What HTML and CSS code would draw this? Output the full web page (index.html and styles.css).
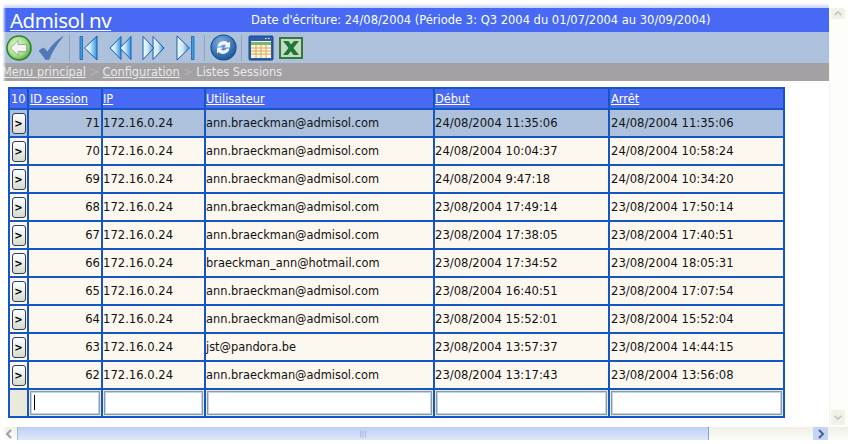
FILE: index.html
```html
<!DOCTYPE html>
<html lang="fr">
<head>
<meta charset="utf-8">
<title>Admisol nv</title>
<link rel="stylesheet" href="styles.css">
</head>
<body>
<div class="window">
  <div class="top-row">
    <main class="main">
      <header class="titlebar">
        <a class="brand">Admisol nv</a>
        <span class="period">Date d'écriture: 24/08/2004 (Période 3: Q3 2004 du 01/07/2004 au 30/09/2004)</span>
      </header>
      <nav class="toolbar">
        <svg class="ico i-go" viewBox="0 0 26 26"><defs><radialGradient id="gb" cx=".4" cy=".4" r=".65"><stop offset="0" stop-color="#eaf7df"/><stop offset=".65" stop-color="#a6dc86"/><stop offset="1" stop-color="#4ea83f"/></radialGradient></defs><circle cx="13" cy="13" r="12" fill="url(#gb)" stroke="#2f7f33" stroke-width="1.6"/><path d="M4.500 13l7.500-7.500v4h8.500v7H12v4z" fill="#f4f6ee" stroke="#8a9a86" stroke-width=".8"/></svg>
        <svg class="ico i-check" viewBox="0 0 26 24"><path d="M1 15C3 13 5 12 6 12L9.500 16C13 10 18 5 25 .5 19 8 14 15 11 23.500H7.500C5.500 20 3 17 1 15Z" fill="#5178b8" stroke="#3e64a6" stroke-width=".5"/></svg>
        <span class="sep s1"></span>
        <svg class="ico i-first" viewBox="0 0 19 26"><defs><linearGradient id="nv" x1="0" y1="0" x2="1" y2="0"><stop offset="0" stop-color="#f4fbff"/><stop offset=".45" stop-color="#cfe9f8"/><stop offset="1" stop-color="#2a93e4"/></linearGradient></defs><path d="M1 1.500h2.500v23H1z" fill="#3aa0e8" stroke="#1a5ca8" stroke-width=".8"/><path d="M18 1v24L5.500 13z" fill="url(#nv)" stroke="#1a5ca8"/></svg>
        <svg class="ico i-prev" viewBox="0 0 23 26"><path d="M12 1.500v23L1 13z" fill="url(#nv)" stroke="#1a5ca8"/><path d="M22 1.500v23L11 13z" fill="url(#nv)" stroke="#1a5ca8"/></svg>
        <svg class="ico i-next" viewBox="0 0 23 26"><path d="M11 1.500v23L22 13z" fill="url(#nv)" stroke="#1a5ca8"/><path d="M1 1.500v23L12 13z" fill="url(#nv)" stroke="#1a5ca8"/></svg>
        <svg class="ico i-last" viewBox="0 0 19 26"><path d="M15.500 1.500H18v23h-2.500z" fill="#3aa0e8" stroke="#1a5ca8" stroke-width=".8"/><path d="M1 1v24L13.500 13z" fill="url(#nv)" stroke="#1a5ca8"/></svg>
        <span class="sep s2"></span>
        <svg class="ico i-refresh" viewBox="0 0 27 27"><defs><radialGradient id="bb" cx=".4" cy=".3" r=".8"><stop offset="0" stop-color="#7fb0e0"/><stop offset="1" stop-color="#0f4d96"/></radialGradient></defs><circle cx="13.500" cy="13.500" r="12.500" fill="url(#bb)" stroke="#174f8f" stroke-width="1.200"/><path d="M7.500 12.500a6.500 6.500 0 0 1 11-3.500L20 7.500v6h-6l2-2a3.600 3.600 0 0 0-5.500 1z" fill="#f2f6fb"/><path d="M19.500 14.500a6.500 6.500 0 0 1-11 3.500L7 19.500v-6h6l-2 2a3.600 3.600 0 0 0 5.500-1z" fill="#f2f6fb"/></svg>
        <span class="sep s3"></span>
        <svg class="ico i-grid" viewBox="0 0 26 26"><rect x="1" y="1" width="24" height="24" rx="1" fill="#2d5cab" stroke="#1f4788"/><rect x="3" y="6" width="20" height="17" fill="#fbf6dc"/><path d="M3 7h20v3H3z" fill="#7cb56b"/><path d="M3 13h20M3 16h20M3 19h20M8 10v13M13 10v13M18 10v13" stroke="#d9a65a" stroke-width="1" fill="none"/><path d="M17 3.500h1.500M20 3.500h1.500" stroke="#fff"/></svg>
        <svg class="ico i-xls" viewBox="0 0 24 22"><rect x="1" y="1" width="22" height="20" fill="#c9d9c0" stroke="#2f7b3f" stroke-width="2"/><path d="M4 4h5.500l2.500 3.500L15 4h5l-5.500 7 5.500 7h-5.500l-2.800-3.800L9 18H4l5.500-7z" fill="#1f7a3a"/></svg>
      </nav>
      <div class="crumbs"><a>Menu principal</a><span class="gt">&gt;</span><a>Configuration</a><span class="gt">&gt;</span><span>Listes Sessions</span></div>
      <div class="content">
        <table class="grid">
          <thead>
            <tr><th class="c0">10</th><th class="c1"><a>ID session</a></th><th class="c2"><a>IP</a></th><th class="c3"><a>Utilisateur</a></th><th class="c4"><a>Début</a></th><th class="c5"><a>Arrêt</a></th></tr>
          </thead>
          <tbody>
            <tr class="sel"><td class="btn"><button>&gt;</button></td><td class="num">71</td><td>172.16.0.24</td><td>ann.braeckman@admisol.com</td><td>24/08/2004 11:35:06</td><td>24/08/2004 11:35:06</td></tr>
            <tr><td class="btn"><button>&gt;</button></td><td class="num">70</td><td>172.16.0.24</td><td>ann.braeckman@admisol.com</td><td>24/08/2004 10:04:37</td><td>24/08/2004 10:58:24</td></tr>
            <tr><td class="btn"><button>&gt;</button></td><td class="num">69</td><td>172.16.0.24</td><td>ann.braeckman@admisol.com</td><td>24/08/2004 9:47:18</td><td>24/08/2004 10:34:20</td></tr>
            <tr><td class="btn"><button>&gt;</button></td><td class="num">68</td><td>172.16.0.24</td><td>ann.braeckman@admisol.com</td><td>23/08/2004 17:49:14</td><td>23/08/2004 17:50:14</td></tr>
            <tr><td class="btn"><button>&gt;</button></td><td class="num">67</td><td>172.16.0.24</td><td>ann.braeckman@admisol.com</td><td>23/08/2004 17:38:05</td><td>23/08/2004 17:40:51</td></tr>
            <tr><td class="btn"><button>&gt;</button></td><td class="num">66</td><td>172.16.0.24</td><td>braeckman_ann@hotmail.com</td><td>23/08/2004 17:34:52</td><td>23/08/2004 18:05:31</td></tr>
            <tr><td class="btn"><button>&gt;</button></td><td class="num">65</td><td>172.16.0.24</td><td>ann.braeckman@admisol.com</td><td>23/08/2004 16:40:51</td><td>23/08/2004 17:07:54</td></tr>
            <tr><td class="btn"><button>&gt;</button></td><td class="num">64</td><td>172.16.0.24</td><td>ann.braeckman@admisol.com</td><td>23/08/2004 15:52:01</td><td>23/08/2004 15:52:04</td></tr>
            <tr><td class="btn"><button>&gt;</button></td><td class="num">63</td><td>172.16.0.24</td><td>jst@pandora.be</td><td>23/08/2004 13:57:37</td><td>23/08/2004 14:44:15</td></tr>
            <tr><td class="btn"><button>&gt;</button></td><td class="num">62</td><td>172.16.0.24</td><td>ann.braeckman@admisol.com</td><td>23/08/2004 13:17:43</td><td>23/08/2004 13:56:08</td></tr>
            <tr class="filter"><td></td><td><div class="field"><span class="caret"></span></div></td><td><div class="field"></div></td><td><div class="field"></div></td><td><div class="field"></div></td><td><div class="field"></div></td></tr>
          </tbody>
        </table>
      </div>
    </main>
    <aside class="vbar">
      <span class="sb-btn up"><svg viewBox="0 0 12 8" class="chev"><path d="M2 6l4-4 4 4" fill="none" stroke="#c4c7bd" stroke-width="2"/></svg></span>
      <span class="sb-btn down"><svg viewBox="0 0 12 8" class="chev"><path d="M2 2l4 4 4-4" fill="none" stroke="#c4c7bd" stroke-width="2"/></svg></span>
    </aside>
  </div>
  <div class="hbar">
    <span class="h-left"><svg viewBox="0 0 8 12" class="chev-h"><path d="M6 2L2 6l4 4" fill="none" stroke="#9aa0a6" stroke-width="2"/></svg></span>
    <span class="thumb"><i>|||</i></span>
    <span class="h-right"><svg viewBox="0 0 8 12" class="chev-h"><path d="M2 2l4 4-4 4" fill="none" stroke="#4d6185" stroke-width="2"/></svg></span>
  </div>
  <div class="edge-left"></div>
</div>
</body>
</html>
```
FILE: styles.css
```css
* { box-sizing: border-box; }
html, body { margin: 0; height: 100%; background: #fff; }
body { font-family: "DejaVu Sans", Verdana, sans-serif; font-size: 11.4px; overflow: hidden; }
.window { position: relative; width: 848px; height: 444px; display: flex; flex-direction: column; padding-top: 8px; background: #fff; overflow: hidden; }
.edge-left { position: absolute; left: 0; top: 0; bottom: 0; width: 6px; background: linear-gradient(90deg, #fff 40%, rgba(255,255,255,0)); }
.window::before { content: ""; position: absolute; left: 0; right: 19px; top: 3px; height: 5px; background: linear-gradient(#fff, #c6d2f6); }
.top-row { display: flex; height: 419px; }
.main { width: 829px; background: #fff; display: flex; flex-direction: column; }
.titlebar { height: 24px; background: #4769f3; display: flex; align-items: center; color: #fff; }
.brand { font-family: "Noto Sans", sans-serif; font-size: 20.500px; letter-spacing: -0.5px; line-height: 24px; text-decoration: underline; text-decoration-thickness: 1px; text-underline-offset: 2px; margin-left: 10px; width: 241px; flex: none; }
.period { font-size: 11.5px; white-space: nowrap; }
.toolbar { height: 31px; background: #adc1dc; display: flex; align-items: center; padding-left: 6px; }
.ico { display: block; flex: none; }
.i-go { width: 26px; height: 26px; margin-right: 6px; }
.i-check { width: 26px; height: 24px; }
.i-first { width: 19px; height: 26px; margin-right: 11px; }
.i-prev { width: 23px; height: 26px; margin-right: 10px; }
.i-next { width: 23px; height: 26px; margin-right: 11px; }
.i-last { width: 19px; height: 26px; }
.i-refresh { width: 27px; height: 27px; }
.i-grid { width: 26px; height: 26px; margin-right: 5px; }
.i-xls { width: 24px; height: 22px; }
.sep { width: 1px; height: 26px; background: #8fa3bf; flex: none; }
.s1 { margin: 0 9px 0 5px; }
.s2 { margin: 0 5px 0 9px; }
.s3 { margin: 0 6px 0 4px; }
.crumbs { height: 18px; background: #a3a1a4; color: #e9e8ea; display: flex; align-items: center; gap: 3.500px; line-height: 18px; padding-left: 2px; }
.crumbs a { text-decoration: underline; }
.gt { color: #b4b3b5; }
.content { padding: 6px 8px; flex: 1; }
.grid { border-collapse: collapse; table-layout: fixed; width: 776px; border: 2px solid #1655c4; }
.grid th, .grid td { border: 2px solid #1655c4; padding: 0 1px; font-weight: normal; text-align: left; white-space: nowrap; overflow: hidden; font-size: 11.6px; }
.grid th:nth-child(n+3), .grid td:nth-child(n+3) { padding-left: 0; }
.grid th:nth-child(n+6), .grid td:nth-child(n+6) { padding-left: 1px; }
.grid th, .grid td:nth-child(4) { font-size: 11.4px; }
.grid th { height: 21px; background: #4769f3; color: #fff; }
.grid th a { text-decoration: underline; }
.grid td { height: 28px; background: #fdf8ef; color: #111; }
.grid .sel td { background: #adc1dc; }
.c0 { width: 19px; } .c1 { width: 74px; } .c2 { width: 103px; } .c3 { width: 229px; } .c4 { width: 175px; } .c5 { width: 175px; }
.grid .num { text-align: right; }
.grid .btn { padding: 0; text-align: center; }
.btn button { width: 14px; height: 21px; padding: 0; font: bold 10px/17px "DejaVu Sans", sans-serif; color: #000; border: 1px solid #2a3f66; border-radius: 3px; background: linear-gradient(#fff, #dcdacb); display: block; margin: 0 auto; }
.grid .filter td { background: #ebe9dc; height: 28px; padding: 0 1px; }
.field { height: 24px; background: #fff; border: 1px solid #7f9db9; outline: 1px solid #c8d2dc; outline-offset: -2px; padding: 3px 2px; }
.caret { display: block; width: 1px; height: 15px; background: #000; margin-left: 1px; }
.vbar { width: 19px; display: flex; flex-direction: column; justify-content: space-between; align-items: center; background: #fdfdfa; border-left: 1px solid #f4f4ee; padding: 0 2px 2px 0; }
.sb-btn { width: 14px; background: #f1f1e8; border-radius: 2px; display: flex; align-items: center; justify-content: center; }
.sb-btn.up { height: 11px; }
.sb-btn.down { height: 15px; }
.chev { width: 10px; height: 7px; }
.hbar { height: 13px; display: flex; align-items: stretch; background: linear-gradient(#f0efe7, #fcfcf8); }
.h-left { width: 17px; display: flex; align-items: center; justify-content: center; }
.chev-h { width: 8px; height: 12px; }
.thumb { width: 692px; background: linear-gradient(#bdcff7, #dfe7fb); border-left: 1px solid #a9b8d8; border-right: 1px solid #8ea0c4; display: flex; align-items: center; justify-content: center; margin-right: 104px; }
.thumb i { font-style: normal; font-size: 7px; color: #8fa4cc; }
.h-right { width: 15px; background: #c4d3f6; display: flex; align-items: center; justify-content: center; }
```
